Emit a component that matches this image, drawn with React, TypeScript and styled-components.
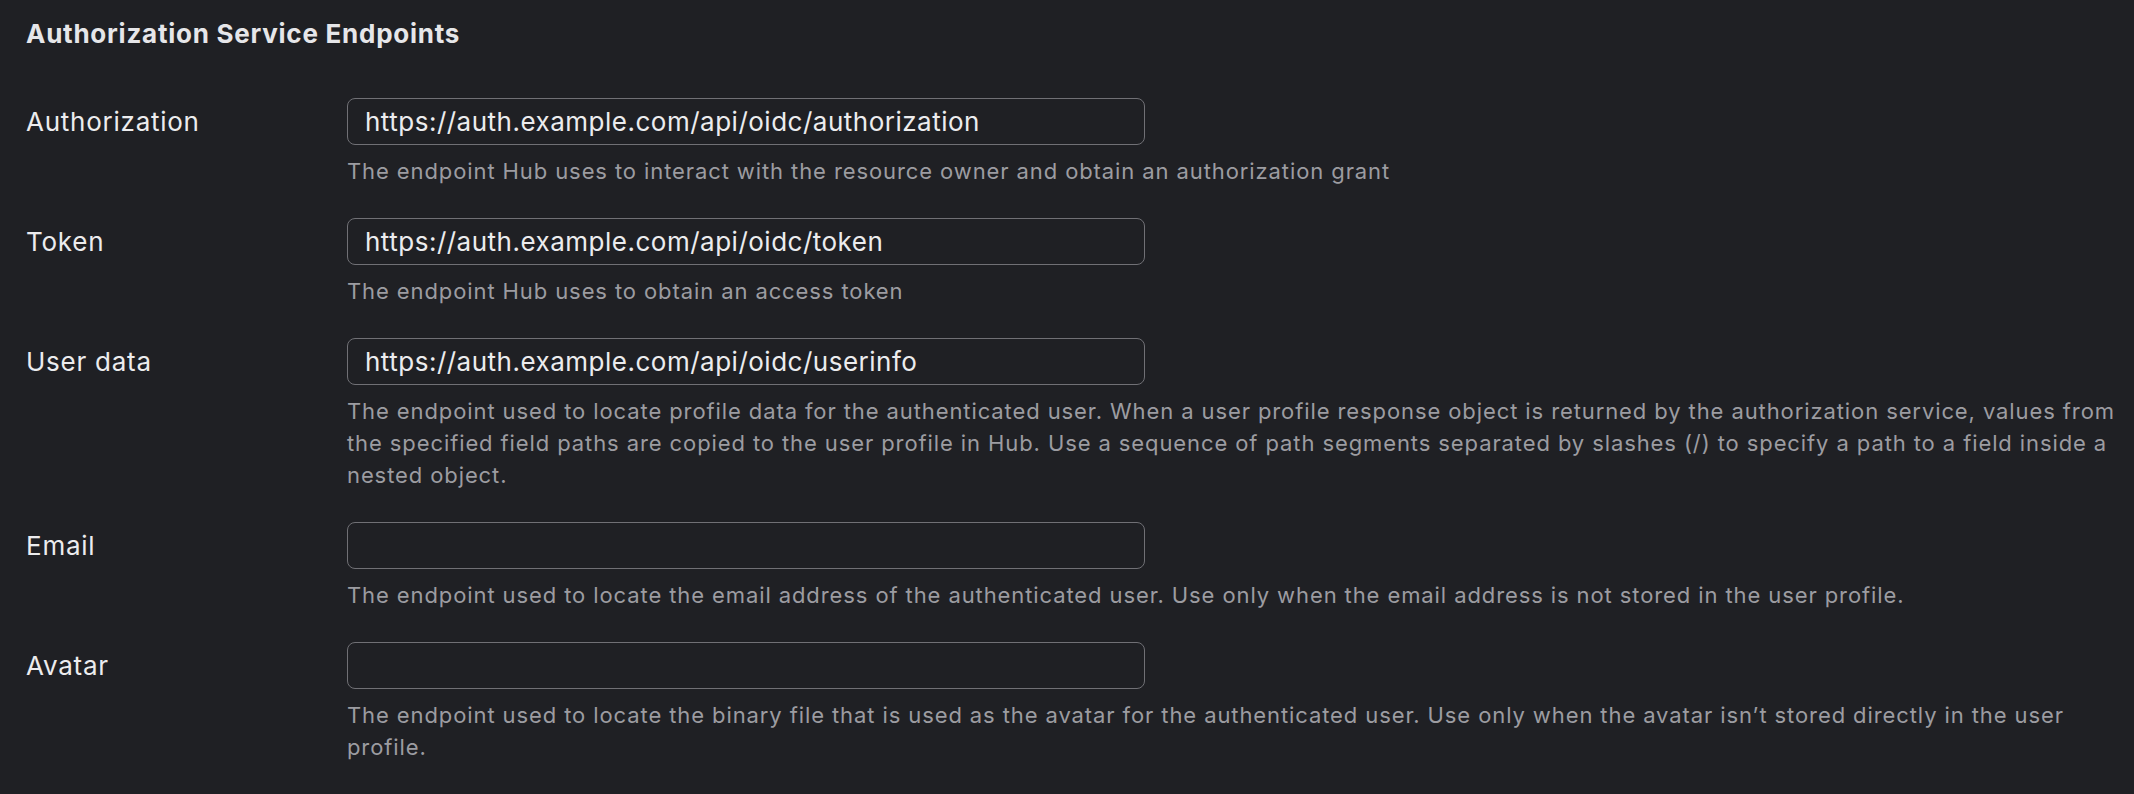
import styled, { createGlobalStyle } from "styled-components";

type Endpoint = {
  label: string;
  value: string;
  help: string;
};

const endpoints: Endpoint[] = [
  {
    label: "Authorization",
    value: "https://auth.example.com/api/oidc/authorization",
    help: "The endpoint Hub uses to interact with the resource owner and obtain an authorization grant",
  },
  {
    label: "Token",
    value: "https://auth.example.com/api/oidc/token",
    help: "The endpoint Hub uses to obtain an access token",
  },
  {
    label: "User data",
    value: "https://auth.example.com/api/oidc/userinfo",
    help: "The endpoint used to locate profile data for the authenticated user. When a user profile response object is returned by the authorization service, values from the specified field paths are copied to the user profile in Hub. Use a sequence of path segments separated by slashes (/) to specify a path to a field inside a nested object.",
  },
  {
    label: "Email",
    value: "",
    help: "The endpoint used to locate the email address of the authenticated user. Use only when the email address is not stored in the user profile.",
  },
  {
    label: "Avatar",
    value: "",
    help: "The endpoint used to locate the binary file that is used as the avatar for the authenticated user. Use only when the avatar isn\u2019t stored directly in the user profile.",
  },
];

const App = () => {
  return (
    <>
      <GlobalStyle />
      <Page>
        <Title>Authorization Service Endpoints</Title>
        <Form>
          {endpoints.map((item) => (
            <Row key={item.label}>
              <Label>{item.label}</Label>
              <Field>
                <Input defaultValue={item.value} spellCheck={false} />
                <Help>{item.help}</Help>
              </Field>
            </Row>
          ))}
        </Form>
      </Page>
    </>
  );
};

export default App;

const GlobalStyle = createGlobalStyle`
  html, body {
    margin: 0;
    padding: 0;
    background: #1f2024;
  }
  * {
    box-sizing: border-box;
  }
`;

const Page = styled.div`
  width: 100%;
  min-height: 794px;
  padding: 18px 12px 0 26px;
  background: #1f2024;
  font-family: Inter, "Noto Sans", sans-serif;
  color: #ececee;
`;

const Title = styled.h2`
  margin: 0;
  font-size: 26px;
  line-height: 32px;
  font-weight: 700;
  letter-spacing: 0.75px;
  color: #e6e6e9;
`;

const Form = styled.div`
  display: flex;
  flex-direction: column;
  gap: 31px;
  margin-top: 48px;
`;

const Row = styled.div`
  display: grid;
  grid-template-columns: 321px 1fr;
  align-items: start;
`;

const Label = styled.label`
  height: 47px;
  display: flex;
  align-items: center;
  font-size: 26px;
  letter-spacing: 0.75px;
  color: #ececee;
`;

const Field = styled.div`
  display: flex;
  flex-direction: column;
  gap: 10px;
`;

const Input = styled.input`
  width: 798px;
  height: 47px;
  padding: 0 17px;
  border: 1.5px solid #707075;
  border-radius: 8px;
  background: #1f2024;
  color: #ececee;
  font-family: inherit;
  font-size: 26px;
  letter-spacing: 0.5px;
  outline: none;
`;

const Help = styled.p`
  margin: 0;
  font-size: 22px;
  line-height: 32px;
  letter-spacing: 0.9px;
  color: #9c9ca1;
`;
